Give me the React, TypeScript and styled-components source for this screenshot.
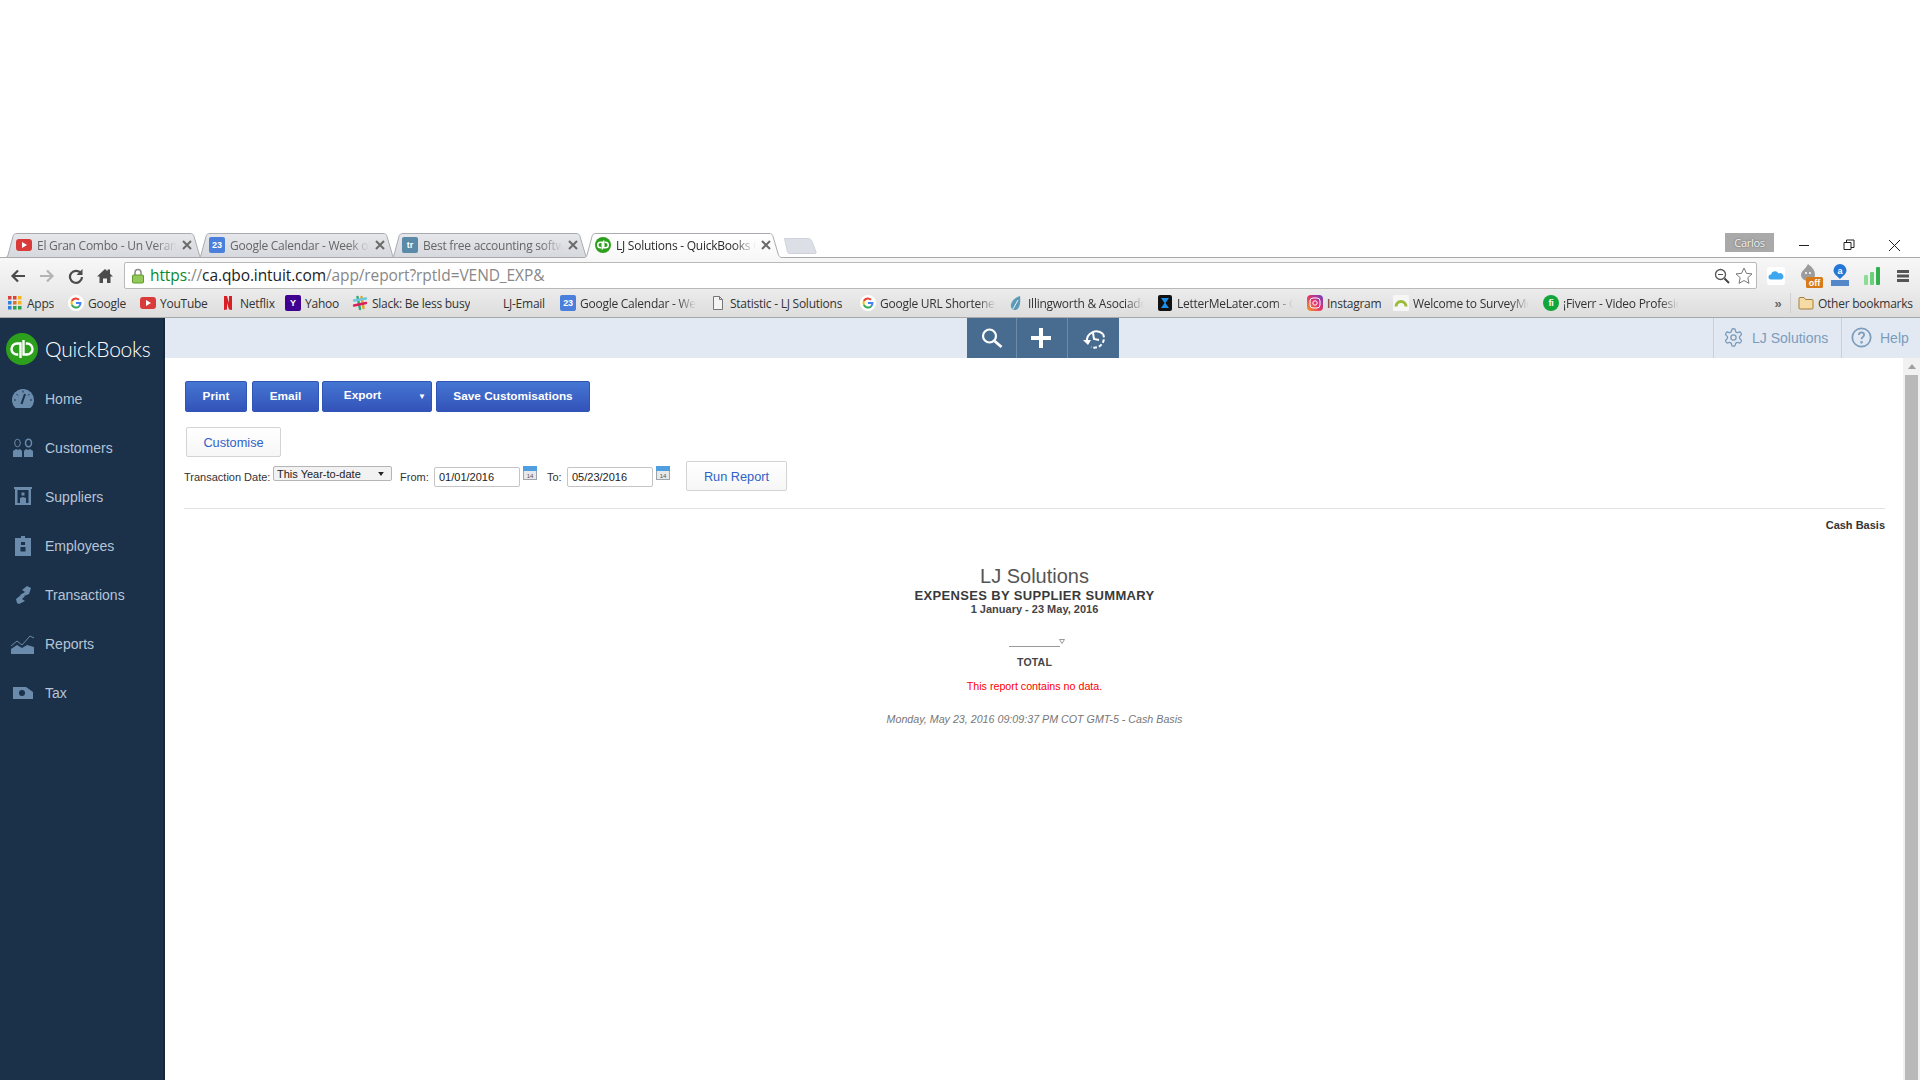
import React from "react";
import styled, { createGlobalStyle } from "styled-components";

const Global = createGlobalStyle`
  html, body { margin: 0; padding: 0; background: #fff; overflow: hidden; }
  #root { width: 1920px; height: 1080px; }
  * { box-sizing: border-box; }
`;

const fade = `-webkit-mask-image: linear-gradient(to right,#000 84%,transparent); mask-image: linear-gradient(to right,#000 84%,transparent);`;

const Page = styled.div`
  width: 1920px; height: 1080px; display: flex; flex-direction: column; overflow: hidden;
  font-family: "Liberation Sans", Arial, sans-serif; background: #fff;
`;
const Blank = styled.div`height: 233px; flex: none; background: #fff;`;
const Strip = styled.div`
  height: 25px; flex: none; display: flex; align-items: stretch; padding-left: 4px; position: relative; background: #fff;
  &::after { content: ""; position: absolute; left: 0; right: 0; bottom: 0; height: 1px; background: #a9a9a9; z-index: 1; }
`;
const Tab = styled.div<{ $active?: boolean }>`
  width: 202px; margin-right: -9px; height: 25px; flex: none; display: flex; align-items: center; gap: 5px; padding: 0 14px 1px 12px;
  position: relative; z-index: ${p => p.$active ? 2 : 0};
  color: ${p => p.$active ? "#2b2b2b" : "#666"};
`;
const TabShapeSvg = styled.svg`position: absolute; left: 0; top: 0; z-index: -1;`;
const TabTitle = styled.span`
  flex: 1; min-width: 0; white-space: nowrap; overflow: hidden; font: 12px "Open Sans", sans-serif; letter-spacing: -.25px; ${fade}
`;
const TabClose = styled.span`flex: none; width: 10px; height: 10px; display: flex; align-items: center; justify-content: center;`;
const NewTabSvg = styled.svg`flex: none; margin: 5px 0 0 8px;`;
const Spacer = styled.div`flex: 1;`;
const Profile = styled.div`
  position: absolute; left: 1725px; top: 0px; width: 49px; height: 19px; background: #a9a9a9; color: #f2f2f2;
  font: 11px "Open Sans", sans-serif; letter-spacing: -.3px; display: flex; align-items: center; justify-content: center;
  text-shadow: 0 0 2px #555;
`;
const WinBtns = styled.div`position: absolute; right: 0; top: 0; height: 24px; width: 130px;`;
const Toolbar = styled.div`
  height: 31px; flex: none; display: flex; align-items: center; padding-top: 4px;
  background: linear-gradient(#f7f7f7,#ececec);
`;
const NavBtn = styled.div`width: 29px; height: 24px; display: flex; align-items: center; justify-content: center; flex: none;`;
const NavGroup = styled.div`display: flex; width: 124px; padding-left: 3px; flex: none;`;
const Omnibox = styled.div`
  width: 1633px; height: 27px; flex: none; background: #fff; border: 1px solid #b9b9b9; border-radius: 2px;
  display: flex; align-items: center; padding: 0 3px 0 6px; gap: 5px;
`;
const Url = styled.div`flex: 1; font: 15.5px "Open Sans", sans-serif; letter-spacing: -.1px; color: #888; white-space: nowrap; padding-bottom: 1px;`;
const Scheme = styled.span`color: #0a8a2c;`;
const Host = styled.span`color: #222;`;
const Exts = styled.div`flex: 1; display: flex; align-items: center; padding-left: 10px;`;
const Ext = styled.div<{ $ml?: number }>`flex: none; display: flex; margin-left: ${p => p.$ml ?? 0}px;`;
const Bookmarks = styled.div`
  height: 29px; flex: none; display: flex; align-items: center; background: linear-gradient(#ececec,#dddddd);
  border-bottom: 1px solid #a9a9a9; padding-left: 7px; position: relative;
`;
const Bm = styled.div<{ $w: number; $ml?: number }>`
  width: ${p => p.$w}px; margin-left: ${p => p.$ml ?? 0}px; flex: none; display: flex; align-items: center; gap: 4px; min-width: 0;
  font: 12px "Open Sans", sans-serif; letter-spacing: -.25px; color: #333;
`;
const BmLabel = styled.span<{ $fade?: boolean }>`
  white-space: nowrap; overflow: hidden; min-width: 0; max-width: 116px;
  ${p => p.$fade ? fade : ""}
`;
const More = styled.div`
  flex: none; width: 25px; display: flex; justify-content: center; align-items: center; height: 20px; margin-left: 74px;
  font: bold 13px "Liberation Sans", sans-serif; color: #666; border-right: 1px solid #cfcfcf;
`;

const App_ = styled.div`flex: 1; min-height: 0; display: flex;`;
const Side = styled.div`
  width: 165px; flex: none; background: #1b3049; border-right: 2px solid #15273c; display: flex; flex-direction: column;
`;
const Logo = styled.div`
  height: 56px; flex: none; display: flex; align-items: flex-start; gap: 7px; padding: 15px 0 0 6px;
  color: #fff; font: 300 21px/31px "Lato", sans-serif; letter-spacing: -.25px;
`;
const NavItem = styled.div`
  height: 49px; flex: none; display: flex; align-items: center; color: #b6c5d8; font: 14px "Liberation Sans", sans-serif;
`;
const NavIcon = styled.div`width: 45px; flex: none; display: flex; justify-content: center; padding-left: 1px;`;
const Main = styled.div`flex: 1; min-width: 0; display: flex; flex-direction: column;`;
const Header = styled.div`height: 40px; flex: none; background: #e2e9f3; display: flex; align-items: stretch;`;
const HeadCenter = styled.div`flex: none; display: flex; margin-left: 802px; background: #486c90;`;
const HeadBtn = styled.div<{ $w: number; $last?: boolean }>`
  width: ${p => p.$w}px; display: flex; align-items: center; justify-content: center; padding-bottom: 1px;
  border-right: ${p => p.$last ? "none" : "1px solid #6d8cab"};
`;
const HeadLink = styled.div<{ $w: number }>`
  width: ${p => p.$w}px; flex: none; border-left: 1px solid #c2d1e3; display: flex; align-items: center; padding: 0 0 1px 9px; gap: 8px;
  color: #7c9cbc; font: 14px "Liberation Sans", sans-serif;
`;
const BodyRow = styled.div`flex: 1; min-height: 0; display: flex;`;
const Content = styled.div`flex: 1; min-width: 0; padding: 23px 18px 0 19px; display: flex; flex-direction: column;`;
const Scroll = styled.div`width: 17px; flex: none; background: #f1f1f1; display: flex; flex-direction: column; align-items: center;`;
const ScrollArrow = styled.div`height: 17px; flex: none; width: 17px; display: flex; align-items: center; justify-content: center;`;
const ScrollThumb = styled.div`width: 13px; flex: 1; background: #b9b9b9;`;
const Actions = styled.div`display: flex; height: 31px; align-items: stretch; margin-left: 1px;`;
const Primary = styled.button<{ $w: number; $gap: number }>`
  width: ${p => p.$w}px; margin-right: ${p => p.$gap}px; border: 1px solid #2f55b5; border-radius: 2px; padding: 0 0 2px;
  background: linear-gradient(#4576d2,#3353ba); color: #fff; font: bold 11.8px "Liberation Sans", sans-serif;
  display: flex; align-items: center; justify-content: center; position: relative;
`;
const ExportLabel = styled.span`margin: -1px 29px 0 0;`;
const Caret = styled.span`position: absolute; right: 5px; top: 10px; font-size: 8px; font-weight: normal;`;
const Secondary = styled.button<{ $w: number }>`
  width: ${p => p.$w}px; height: 30px; border: 1px solid #d3d3d3; border-radius: 2px; background: linear-gradient(#fff,#f6f6f6);
  color: #2f62c8; font: 12.75px "Liberation Sans", sans-serif; padding: 0; flex: none;
`;
const CustomiseRow = styled.div`margin: 15px 0 0 2px; display: flex;`;
const FilterRow = styled.div`
  display: flex; align-items: flex-start; height: 29px; margin-top: 4px; font: 11px "Liberation Sans", sans-serif; color: #333;
`;
const Lbl = styled.span<{ $w: number; $ml?: number }>`
  width: ${p => p.$w}px; flex: none; margin: 10px 0 0 ${p => p.$ml ?? 0}px; white-space: nowrap;
`;
const Select = styled.div`
  width: 119px; height: 15px; margin-top: 5px; border: 1px solid #b5b5b5; border-radius: 2px; background: #f2f2f2; display: flex; align-items: center; justify-content: space-between;
  padding: 0 7px 0 3px; color: #222;
`;
const DateBox = styled.div`
  width: 86px; height: 20px; margin-top: 6px; border: 1px solid #c5c5c5; border-radius: 2px; padding: 0 4px; display: flex; align-items: center; color: #222;
`;
const CalWrap = styled.div`margin: 5px 0 0 3px; width: 14px; height: 14px; flex: none;`;
const RunWrap = styled.div`margin-left: 16px;`;
const Rule = styled.div`height: 1px; background: #e2e2e2; margin-top: 18px;`;
const Basis = styled.div`font: bold 11px "Liberation Sans", sans-serif; color: #333; text-align: right; margin-top: 10px;`;
const Report = styled.div`display: flex; flex-direction: column; align-items: center; margin-top: 33px;`;
const Company = styled.div`font: 20px/24px "Liberation Sans", sans-serif; color: #555;`;
const RTitle = styled.div`font: bold 13px/15px "Liberation Sans", sans-serif; color: #3a3a3a; letter-spacing: .35px;`;
const RDate = styled.div`font: bold 11px/13px "Liberation Sans", sans-serif; color: #444;`;
const ColHead = styled.div`width: 51px; height: 1px; background: #9a9a9a; margin-top: 30px; position: relative;`;
const Tri = styled.svg`position: absolute; right: -5px; top: -7px;`;
const Total = styled.div`font: bold 10.5px/13px "Liberation Sans", sans-serif; color: #444; margin-top: 9px; letter-spacing: .2px;`;
const NoData = styled.div`font: 10.7px/13px "Liberation Sans", sans-serif; color: #f00; margin-top: 11px;`;
const Stamp = styled.div`font: italic 10.7px/13px "Liberation Sans", sans-serif; color: #777; margin-top: 20px;`;

const Glyph = styled.span<{ $bg: string; $round?: boolean }>`
  width: 16px; height: 16px; flex: none; border-radius: ${p => p.$round ? "50%" : "2px"}; background: ${p => p.$bg}; color: #fff; display: inline-flex; align-items: center; justify-content: center;
  font: bold 9px "Liberation Sans", sans-serif; overflow: hidden;
`;

const TabShape = ({ active }: { active?: boolean }) => (
  <TabShapeSvg width="202" height="25" viewBox="0 0 202 25">
    <defs>
      <linearGradient id="tabI" x1="0" y1="0" x2="0" y2="1"><stop offset="0" stopColor="#e6e7ea" /><stop offset="1" stopColor="#d5d8de" /></linearGradient>
      <linearGradient id="tabA" x1="0" y1="0" x2="0" y2="1"><stop offset="0" stopColor="#fff" /><stop offset="1" stopColor="#f8f8f8" /></linearGradient>
    </defs>
    <path
      d="M0 25C2.500 25 3.500 23.500 4 22L9 3.500C9.500 1.500 10.500.5 13 .5H186C188.500.5 189.500 1.500 190 3.500L195.500 22C196 23.500 197.500 25 202 25"
      fill={active ? "url(#tabA)" : "url(#tabI)"} stroke="#a8abb0"
    />
  </TabShapeSvg>
);
const CloseX = () => (
  <TabClose><svg width="10" height="10" viewBox="0 0 10 10"><path d="M1 1l8 8M9 1l-8 8" stroke="#6b6b6b" strokeWidth="2" /></svg></TabClose>
);
const Play = () => (
  <svg width="16" height="16" viewBox="0 0 16 16" style={{ flex: "none" }}><rect x="0" y="2" width="16" height="12" rx="3" fill="#d93a3a" /><path d="M6 5l5 3-5 3z" fill="#fff" /></svg>
);
const GoogleG = () => (
  <svg width="16" height="16" viewBox="0 0 16 16" style={{ flex: "none" }}>
    <circle cx="8" cy="8" r="8" fill="#fff" />
    <path d="M8 3.500A4.500 4.500 0 0 1 11 4.700" fill="none" stroke="#ea4335" strokeWidth="2" />
    <path d="M8 3.500A4.500 4.500 0 0 0 3.900 6.200" fill="none" stroke="#ea4335" strokeWidth="2" />
    <path d="M3.900 6.200a4.500 4.500 0 0 0 0 3.600" fill="none" stroke="#fbbc05" strokeWidth="2" />
    <path d="M3.900 9.800A4.500 4.500 0 0 0 11 11.400" fill="none" stroke="#34a853" strokeWidth="2" />
    <path d="M11 11.400A4.500 4.500 0 0 0 12.500 8H8" fill="none" stroke="#4285f4" strokeWidth="2" />
  </svg>
);
const Cal23 = () => <Glyph $bg="#4a7fdc">23</Glyph>;
const Doc = () => (
  <svg width="16" height="16" viewBox="0 0 16 16" style={{ flex: "none" }}><path d="M3.500 1.500h6l3 3v10h-9z M9.500 1.500v3h3" fill="#f4f4f4" stroke="#777" /></svg>
);
const QbPaths = ({ w }: { w: number }) => (
  <g fill="none" stroke="#fff" strokeWidth={w}>
    <path d="M14.500 25V10.500H11a5.500 5.500 0 0 0 0 11h1.200" />
    <path d="M17.500 7V21.500H21a5.500 5.500 0 0 0 0-11h-1.200" />
  </g>
);
const QbMini = () => (
  <svg width="16" height="16" viewBox="0 0 32 32" style={{ flex: "none" }}><circle cx="16" cy="16" r="16" fill="#2ca01c" /><QbPaths w={3} /></svg>
);
const Appsgrid = () => (
  <svg width="16" height="16" viewBox="0 0 16 16" style={{ flex: "none" }}>
    {[["#d9423a", 1, 1], ["#d9423a", 6, 1], ["#f3b51e", 11, 1], ["#2f7fdc", 1, 6], ["#e0712a", 6, 6], ["#f3b51e", 11, 6], ["#2f7fdc", 1, 11], ["#2ea44f", 6, 11], ["#2ea44f", 11, 11]].map(([c, x, y], i) => (
      <rect key={i} x={x as number} y={y as number} width="3.500" height="3.500" fill={c as string} />
    ))}
  </svg>
);
const Netflix = () => (
  <svg width="16" height="16" viewBox="0 0 16 16" style={{ flex: "none" }}><path d="M4 1h3l2 7V1h3v14l-3-.4L7 8v6.500l-3 .5z" fill="#d81f26" /></svg>
);
const Slack = () => (
  <svg width="16" height="16" viewBox="0 0 16 16" style={{ flex: "none" }}><g strokeWidth="2.400" strokeLinecap="round"><path d="M5.500 2l2.500 12" stroke="#2fa67a" /><path d="M9.500 2l2 11" stroke="#e4a21c" /><path d="M2 10.500l12-2.500" stroke="#d7215f" /><path d="M2 5.500l12-2" stroke="#6ec6df" /></g></svg>
);
const Leaf = () => (
  <svg width="16" height="16" viewBox="0 0 16 16" style={{ flex: "none" }}><path d="M12 1C6 3 2 8 3 12c.5 2 2 3 4 3 4 0 6-6 5-14z" fill="#5d9ab8" /><path d="M5 14L10 5" stroke="#e8f2f6" /></svg>
);
const Hourglass = () => (
  <svg width="16" height="16" viewBox="0 0 16 16" style={{ flex: "none" }}><rect x="1" y="0" width="14" height="16" rx="2" fill="#111" /><path d="M4 3h8L8.500 8 12 13H4l3.500-5z" fill="#1d8fe8" /></svg>
);
const Insta = () => (
  <svg width="16" height="16" viewBox="0 0 16 16" style={{ flex: "none" }}><defs><linearGradient id="ig" x1="0" y1="1" x2="1" y2="0"><stop offset="0" stopColor="#f8a21c" /><stop offset=".5" stopColor="#e3326e" /><stop offset="1" stopColor="#6a3fc8" /></linearGradient></defs><rect width="16" height="16" rx="4" fill="url(#ig)" /><rect x="3" y="3" width="10" height="10" rx="3" fill="none" stroke="#fff" /><circle cx="8" cy="8" r="2.200" fill="none" stroke="#fff" /></svg>
);
const Survey = () => (
  <svg width="16" height="16" viewBox="0 0 16 16" style={{ flex: "none" }}><rect width="16" height="16" rx="1" fill="#f6f6f6" /><path d="M3 11.500a5 5 0 0 1 10 0" fill="none" stroke="#9bbb3b" strokeWidth="3" /></svg>
);
const Fiverr = () => <Glyph $bg="#12a53a" $round>fi</Glyph>;
const Folder = () => (
  <svg width="16" height="16" viewBox="0 0 16 16" style={{ flex: "none" }}><path d="M1 3.500a1 1 0 0 1 1-1h4l1.500 2H14a1 1 0 0 1 1 1V13a1 1 0 0 1-1 1H2a1 1 0 0 1-1-1z" fill="#f6dca4" stroke="#a37f3c" /></svg>
);
const Cal14 = () => (
  <svg width="14" height="14" viewBox="0 0 14 14"><rect x=".5" y=".5" width="13" height="13" fill="#e8e8e8" stroke="#9aa5ad" /><rect x="0" y="0" width="14" height="5" fill="#4f9ee0" /><text x="7" y="12" fontSize="6" textAnchor="middle" fill="#555" fontFamily="Liberation Sans">14</text></svg>
);

const IC = "#6a8bab";
const navIcons: Record<string, React.ReactNode> = {
  Home: <svg width="24" height="20" viewBox="0 0 24 20"><path d="M4.500 19A11 11 0 1 1 19.500 19z" fill={IC} /><path d="M14 5l-3.500 10" stroke="#1b3049" strokeWidth="2" /><path d="M12 1.500v2M3 11h2M19 11h2M5.500 5l1.500 1.500M18.500 5L17 6.500" stroke="#1b3049" /></svg>,
  Customers: <svg width="20" height="19" viewBox="0 0 20 19"><path d="M0 19v-6l3-2 2 1 2-1 2 2v6zM11 19v-6l2-2 2 1 2-1 3 2v6z" fill={IC} /><ellipse cx="4.500" cy="5" rx="2.800" ry="3.800" fill="none" stroke={IC} /><ellipse cx="15.500" cy="5" rx="3" ry="3.800" fill="none" stroke={IC} strokeWidth="1.500" /></svg>,
  Suppliers: <svg width="18" height="20" viewBox="0 0 18 20"><rect x="0" y="0" width="18" height="2" fill={IC} /><path d="M1 2h16v16H1z" fill={IC} /><path d="M3.500 3h11v13h-11z" fill="#1b3049" /><path d="M6 16v-5l3-1 3 1v5z" fill={IC} /><rect x="7.500" y="5.500" width="3" height="3" fill={IC} /></svg>,
  Employees: <svg width="16" height="20" viewBox="0 0 16 20"><path d="M0 2h6V0h4v2h6v18H0z" fill={IC} /><rect x="6" y="6" width="4" height="3" fill="#1b3049" /><rect x="5.500" y="11" width="5" height="4.500" fill="#1b3049" /></svg>,
  Transactions: <svg width="16" height="20" viewBox="0 0 16 20"><path d="M12 1l4 2-2 6-5 2-4-1 5-3-3-2zM1 14l5-4 4 1-3 3 3 2-6 3-2-1z" fill={IC} /></svg>,
  Reports: <svg width="24" height="20" viewBox="0 0 24 20"><path d="M0 12l6-5 5 4 8-9 4 2" fill="none" stroke={IC} /><path d="M0 20v-5l6-4 5 3 5-3 7 2v7z" fill={IC} /></svg>,
  Tax: <svg width="20" height="12" viewBox="0 0 20 12"><path d="M0 0h13l7 5v7H0z" fill={IC} /><circle cx="9" cy="6" r="3" fill="#1b3049" /></svg>,
};

const bookmarks: [string, React.ReactNode, number, boolean?][] = [
  ["Google Calendar - Week", <Cal23 />, 150, true],
  ["Statistic - LJ Solutions", <Doc />, 150],
  ["Google URL Shortener", <GoogleG />, 148, true],
  ["Illingworth & Asociados", <Leaf />, 149, true],
  ["LetterMeLater.com - Calendar", <Hourglass />, 150, true],
  ["Instagram", <Insta />, 86],
  ["Welcome to SurveyMonkey", <Survey />, 150, true],
  ["¡Fiverr - Video Profesional", <Fiverr />, 149, true],
];
const firstMarks: [string, React.ReactNode, number][] = [
  ["Apps", <Appsgrid />, 61],
  ["Google", <GoogleG />, 72],
  ["YouTube", <Play />, 80],
  ["Netflix", <Netflix />, 65],
  ["Yahoo", <Glyph $bg="#400090">Y</Glyph>, 67],
  ["Slack: Be less busy", <Slack />, 151],
];

const nav = ["Home", "Customers", "Suppliers", "Employees", "Transactions", "Reports", "Tax"];

export default function App() {
  return (
    <Page>
      <Global />
      <Blank />
      <Strip>
        <Tab><TabShape /><Play /><TabTitle>El Gran Combo - Un Verano en Nueva York</TabTitle><CloseX /></Tab>
        <Tab><TabShape /><Cal23 /><TabTitle>Google Calendar - Week of May</TabTitle><CloseX /></Tab>
        <Tab><TabShape /><Glyph $bg="#5a8aa8">tr</Glyph><TabTitle>Best free accounting software</TabTitle><CloseX /></Tab>
        <Tab $active><TabShape active /><QbMini /><TabTitle>LJ Solutions - QuickBooks Online</TabTitle><CloseX /></Tab>
        <NewTabSvg width="33" height="16" viewBox="0 0 33 16"><path d="M.5 .5H24C26 .5 27 1.500 28 3.500L32 14C32.500 15 32 15.500 31 15.500H6C4.500 15.500 4 15 3.500 14z" fill="#dce0e6" stroke="#cfd3d9" /></NewTabSvg>
        <Spacer />
        <Profile>Carlos</Profile>
        <WinBtns>
          <svg width="130" height="24" viewBox="0 0 130 24">
            <path d="M9 12.500h10" stroke="#222" />
            <path d="M54 9.500h7v7h-7zM56.500 9V7h7.500v7.500h-3" fill="none" stroke="#222" />
            <path d="M99 7l11 11M110 7l-11 11" stroke="#222" />
          </svg>
        </WinBtns>
      </Strip>
      <Toolbar>
        <NavGroup>
          <NavBtn><svg width="16" height="16" viewBox="0 0 16 16"><path d="M8 2.500L2.500 8 8 13.500M3 8h12" fill="none" stroke="#4b4b4b" strokeWidth="2.200" /></svg></NavBtn>
          <NavBtn><svg width="16" height="16" viewBox="0 0 16 16"><path d="M8 2.500L13.500 8 8 13.500M13 8H1" fill="none" stroke="#b4b4b4" strokeWidth="2.200" /></svg></NavBtn>
          <NavBtn><svg width="16" height="16" viewBox="0 0 16 16"><path d="M13 5.500A6 6 0 1 0 14 9" fill="none" stroke="#4b4b4b" strokeWidth="2.200" /><path d="M14.500 1v6h-6z" fill="#4b4b4b" /></svg></NavBtn>
          <NavBtn><svg width="16" height="16" viewBox="0 0 16 16"><path d="M8 1l2.500 2.300V1.500h2.500v4.200L16 8.500h-2.500V15H10v-4.500H6V15H2.500V8.500H0z" fill="#4b4b4b" /></svg></NavBtn>
        </NavGroup>
        <Omnibox>
          <svg width="14" height="16" viewBox="0 0 14 16"><path d="M4 7V4.500a3 3 0 0 1 6 0V7" fill="none" stroke="#8a8a8a" strokeWidth="1.500" /><rect x="1.500" y="7" width="11" height="8" rx="1" fill="#93c85a" stroke="#5f9a2c" /></svg>
          <Url><Scheme>https</Scheme><span>://</span><Host>ca.qbo.intuit.com</Host>/app/report?rptId=VEND_EXP&amp;</Url>
          <svg width="16" height="16" viewBox="0 0 16 16"><circle cx="6.500" cy="6.500" r="5" fill="none" stroke="#555" strokeWidth="1.300" /><path d="M4 6.500h5" stroke="#555" /><path d="M10.500 10.500L15 15" stroke="#444" strokeWidth="2" /></svg>
          <svg width="18" height="18" viewBox="0 0 18 18"><path d="M9 1l2.400 5.300 5.600.6-4.200 3.800 1.200 5.700L9 13.500 4 16.400l1.200-5.700L1 6.900l5.600-.6z" fill="#fff" stroke="#777" /></svg>
        </Omnibox>
        <Exts>
          <Ext><svg width="18" height="20" viewBox="0 0 18 20"><rect x="0" y="1" width="18" height="18" rx="3" fill="#fff" /><path d="M4 13.500a2.500 2.500 0 0 1 0-5 4 4 0 0 1 7.500-1 3 3 0 0 1 3 6z" fill="#3ca7ee" /></svg></Ext>
          <Ext $ml={14}><svg width="24" height="26" viewBox="0 0 24 26"><path d="M9 1c4 3 7 6 7 11a7 6 0 0 1-14 0C2 8 6 7 9 1z" fill="#9c9c9c" /><circle cx="7" cy="10" r="1" fill="#fff" /><circle cx="11" cy="10" r="1" fill="#fff" /><rect x="7" y="14" width="17" height="11" rx="1.500" fill="#d97a18" /><text x="15.500" y="23" fontSize="9" textAnchor="middle" fill="#fff" fontWeight="bold" fontFamily="Liberation Sans">off</text></svg></Ext>
          <Ext $ml={7}><svg width="20" height="24" viewBox="0 0 20 24"><path d="M10 0a6.500 6.500 0 0 1 6.500 6.500C16.500 10 12 13 10 15 8 13 3.500 10 3.500 6.500A6.500 6.500 0 0 1 10 0z" fill="#2476d8" /><text x="10" y="10" fontSize="9" textAnchor="middle" fill="#fff" fontWeight="bold" fontFamily="Liberation Sans">a</text><rect x="1" y="16" width="18" height="6" fill="#5588c8" /></svg></Ext>
          <Ext $ml={13}><svg width="18" height="20" viewBox="0 0 18 20"><rect x="1" y="9" width="4" height="10" rx="1" fill="#8ddc96" /><rect x="7" y="6" width="4" height="13" rx="1" fill="#6ccf7a" /><rect x="13" y="1" width="4" height="18" rx="1" fill="#35b050" /></svg></Ext>
          <Ext $ml={15}><svg width="14" height="14" viewBox="0 0 14 14"><path d="M1 1h12v3H1zM1 5.500h12v3H1zM1 10h12v3H1z" fill="#555" /></svg></Ext>
        </Exts>
      </Toolbar>
      <Bookmarks>
        {firstMarks.map(([t, ic, w]) => <Bm key={t} $w={w}>{ic}<BmLabel>{t}</BmLabel></Bm>)}
        <Bm $w={57}><BmLabel>LJ-Email</BmLabel></Bm>
        {bookmarks.map(([t, ic, w, f]) => <Bm key={t} $w={w}>{ic}<BmLabel $fade={f}>{t}</BmLabel></Bm>)}
        <More>»</More>
        <Bm $w={120} $ml={7}><Folder /><BmLabel>Other bookmarks</BmLabel></Bm>
      </Bookmarks>
      <App_>
        <Side>
          <Logo>
            <svg width="32" height="32" viewBox="0 0 32 32" style={{ flex: "none" }}><circle cx="16" cy="16" r="16" fill="#2ca01c" /><QbPaths w={2.400} /></svg>
            QuickBooks
          </Logo>
          {nav.map(n => (
            <NavItem key={n}><NavIcon>{navIcons[n]}</NavIcon>{n}</NavItem>
          ))}
        </Side>
        <Main>
          <Header>
            <HeadCenter>
              <HeadBtn $w={50}><svg width="24" height="24" viewBox="0 0 24 24"><circle cx="9.500" cy="10" r="6.500" fill="none" stroke="#fff" strokeWidth="2.200" /><path d="M14.500 15l7 6" stroke="#fff" strokeWidth="2.800" /></svg></HeadBtn>
              <HeadBtn $w={51}><svg width="24" height="24" viewBox="0 0 24 24"><path d="M11 2v20M1 12h20" stroke="#fff" strokeWidth="4" /></svg></HeadBtn>
              <HeadBtn $w={51} $last><svg width="24" height="24" viewBox="0 0 24 24"><path d="M5 16A9.500 9.500 0 0 1 21 8" fill="none" stroke="#fff" strokeWidth="2" /><path d="M21 8A9.500 9.500 0 0 1 9 21" fill="none" stroke="#fff" strokeWidth="2" strokeDasharray="3.500 2" /><path d="M1 14l5 5 3-5z" fill="#fff" /><path d="M11 7l1 6 5 1" fill="none" stroke="#fff" strokeWidth="2" /></svg></HeadBtn>
            </HeadCenter>
            <Spacer />
            <HeadLink $w={128}><svg width="21" height="21" viewBox="0 0 24 24" fill="none" stroke="#7c9cbc" strokeWidth="1.500"><path d="M12.220 2h-.44a2 2 0 0 0-2 2v.18a2 2 0 0 1-1 1.730l-.43.25a2 2 0 0 1-2 0l-.15-.08a2 2 0 0 0-2.730.73l-.22.38a2 2 0 0 0 .73 2.730l.15.1a2 2 0 0 1 1 1.720v.51a2 2 0 0 1-1 1.740l-.15.09a2 2 0 0 0-.73 2.730l.22.38a2 2 0 0 0 2.730.73l.15-.08a2 2 0 0 1 2 0l.43.25a2 2 0 0 1 1 1.730V20a2 2 0 0 0 2 2h.44a2 2 0 0 0 2-2v-.18a2 2 0 0 1 1-1.730l.43-.25a2 2 0 0 1 2 0l.15.08a2 2 0 0 0 2.730-.73l.22-.39a2 2 0 0 0-.73-2.730l-.15-.08a2 2 0 0 1-1-1.740v-.5a2 2 0 0 1 1-1.740l.15-.09a2 2 0 0 0 .73-2.730l-.22-.38a2 2 0 0 0-2.730-.73l-.15.08a2 2 0 0 1-2 0l-.43-.25a2 2 0 0 1-1-1.730V4a2 2 0 0 0-2-2z" /><circle cx="12" cy="12" r="3" /></svg>LJ Solutions</HeadLink>
            <HeadLink $w={79}><svg width="21" height="21" viewBox="0 0 24 24" fill="none" stroke="#7c9cbc" strokeWidth="2"><circle cx="12" cy="12" r="10.500" /><path d="M9 9a3 3 0 0 1 6 0c0 2-3 2.500-3 5" /><circle cx="12" cy="17.500" r=".6" /></svg>Help</HeadLink>
          </Header>
          <BodyRow>
            <Content>
              <Actions>
                <Primary $w={62} $gap={5}>Print</Primary>
                <Primary $w={67} $gap={3}>Email</Primary>
                <Primary $w={110} $gap={4}><ExportLabel>Export</ExportLabel><Caret>▼</Caret></Primary>
                <Primary $w={154} $gap={0}>Save Customisations</Primary>
              </Actions>
              <CustomiseRow><Secondary $w={95}>Customise</Secondary></CustomiseRow>
              <FilterRow>
                <Lbl $w={89}>Transaction Date:</Lbl>
                <Select>This Year-to-date<svg width="6" height="4" viewBox="0 0 7 5"><path d="M0 0h7L3.500 5z" fill="#222" /></svg></Select>
                <Lbl $w={34} $ml={8}>From:</Lbl>
                <DateBox>01/01/2016</DateBox>
                <CalWrap><Cal14 /></CalWrap>
                <Lbl $w={20} $ml={10}>To:</Lbl>
                <DateBox>05/23/2016</DateBox>
                <CalWrap><Cal14 /></CalWrap>
                <RunWrap><Secondary $w={101}>Run Report</Secondary></RunWrap>
              </FilterRow>
              <Rule />
              <Basis>Cash Basis</Basis>
              <Report>
                <Company>LJ Solutions</Company>
                <RTitle>EXPENSES BY SUPPLIER SUMMARY</RTitle>
                <RDate>1 January - 23 May, 2016</RDate>
                <ColHead><Tri width="6" height="5" viewBox="0 0 6 5"><path d="M.5 .5h5L3 4.500z" fill="#fff" stroke="#9a9a9a" /></Tri></ColHead>
                <Total>TOTAL</Total>
                <NoData>This report contains no data.</NoData>
                <Stamp>Monday, May 23, 2016 09:09:37 PM COT GMT-5 - Cash Basis</Stamp>
              </Report>
            </Content>
            <Scroll>
              <ScrollArrow><svg width="8" height="5" viewBox="0 0 8 5"><path d="M4 0l4 5H0z" fill="#a0a0a0" /></svg></ScrollArrow>
              <ScrollThumb />
            </Scroll>
          </BodyRow>
        </Main>
      </App_>
    </Page>
  );
}
